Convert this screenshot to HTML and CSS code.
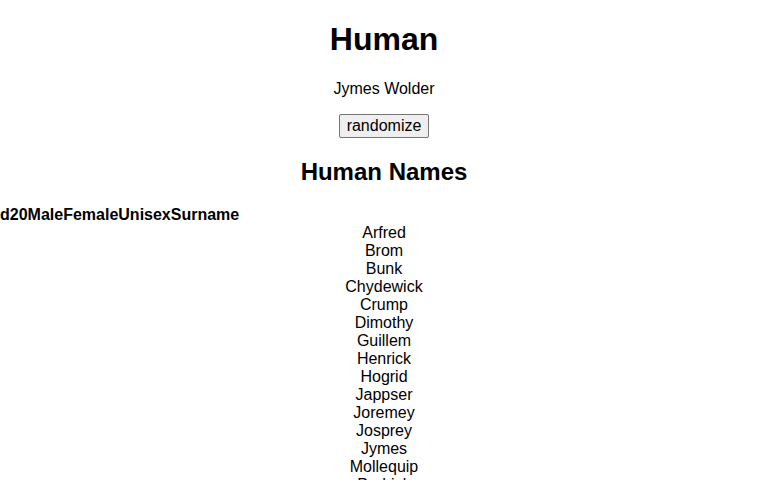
FILE: index.html
```html
<!DOCTYPE html>
<html>
<head>
<meta charset="utf-8">
<link rel="stylesheet" href="styles.css">
</head>
<body>
<h1>Human</h1>
<p class="name">Jymes Wolder</p>
<div class="actions"><button class="btn">randomize</button></div>
<h2>Human Names</h2>
<div class="table">
  <div class="head"><span>d20</span><span>Male</span><span>Female</span><span>Unisex</span><span>Surname</span></div>
  <div class="rows">
    <div>Arfred</div>
    <div>Brom</div>
    <div>Bunk</div>
    <div>Chydewick</div>
    <div>Crump</div>
    <div>Dimothy</div>
    <div>Guillem</div>
    <div>Henrick</div>
    <div>Hogrid</div>
    <div>Jappser</div>
    <div>Joremey</div>
    <div>Josprey</div>
    <div>Jymes</div>
    <div>Mollequip</div>
    <div>Podrick</div>
    <div>Rodney</div>
  </div>
</div>
</body>
</html>
```
FILE: styles.css
```css
html, body {
  margin: 0;
  padding: 0;
  background: #fff;
  color: #000;
  font-family: "Liberation Sans", Arial, sans-serif;
  font-size: 16px;
  text-align: center;
}
h1 {
  font-size: 32px;
  margin: 21.44px 0;
}
h2 {
  font-size: 24px;
  margin: 19.92px 0;
}
.name {
  margin: 16px 0;
}
.actions {
  margin: 0;
}
.btn {
  font-family: "Liberation Sans", Arial, sans-serif;
  font-size: 16px;
  line-height: 18px;
  padding: 2px 7px;
  border: 1px solid #767676;
  border-radius: 2px;
  background: #efefef;
  color: #000;
}
.head {
  display: flex;
  font-weight: bold;
  text-align: left;
  line-height: 18px;
}
.rows div {
  line-height: 18px;
}
```
